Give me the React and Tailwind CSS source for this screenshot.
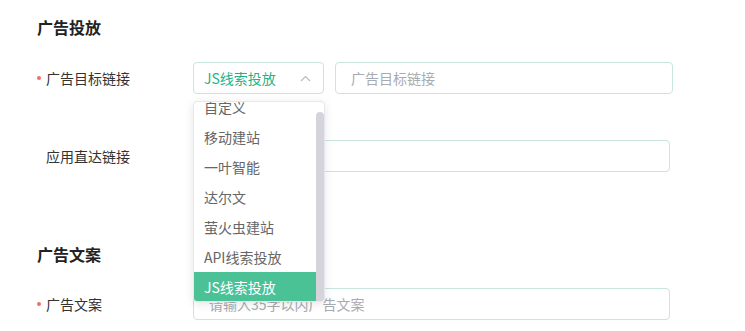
import React from "react";

const FONT = { fontFamily: '"Noto Sans CJK SC", "Noto Sans", sans-serif' };

const OPTIONS = ["自定义", "移动建站", "一叶智能", "达尔文", "萤火虫建站", "API线索投放", "JS线索投放"];

const Label = ({ required, children }) => (
  <div className="w-[156px] shrink-0 flex items-center text-[14px] text-[#333]">
    <span className={`w-[4px] h-[4px] rounded-full bg-[#f56c6c] mr-[5px] ${required ? "" : "invisible"}`} />
    <span>{children}</span>
  </div>
);

const Input = ({ placeholder, className = "" }) => (
  <div className={`h-[32px] border border-[#c8e6dc] rounded-[4px] bg-white flex items-center px-[15px] text-[14px] text-[#a8abb2] ${className}`}>
    {placeholder}
  </div>
);

export default function App() {
  return (
    <div className="w-[745px] h-[331px] bg-white overflow-hidden" style={FONT}>
      <div className="pl-[37px] pt-[16px]">
        <h2 className="text-[16px] font-bold text-[#222] leading-[22px]">广告投放</h2>

        <div className="mt-[24px] flex items-center">
          <Label required>广告目标链接</Label>
          <div className="relative">
            <div className="w-[131px] h-[32px] border border-[#c8e6dc] rounded-[4px] bg-white flex items-center justify-between pl-[10px] pr-[12px]">
              <span className="text-[14px] text-[#1eb386]">JS线索投放</span>
              <svg width="11" height="7" viewBox="0 0 11 7" fill="none">
                <path d="M1 6L5.5 1.5L10 6" stroke="#b8bcc4" strokeWidth="1.2" />
              </svg>
            </div>
            <div className="absolute z-10 left-0 top-[39px] w-[132px] h-[201px] bg-white rounded-[4px] border border-[#e4e7ed] shadow-[0_2px_10px_rgba(0,0,0,0.1)] overflow-hidden">
              <div className="mt-[-10px] mr-[8px]">
                {OPTIONS.map((o) => (
                  <div
                    key={o}
                    className={`h-[30px] flex items-center pl-[10px] text-[14px] ${
                      o === "JS线索投放" ? "bg-[#4bc296] text-white" : "text-[#666]"
                    }`}
                  >
                    {o}
                  </div>
                ))}
              </div>
              <div className="absolute right-0 top-[10px] bottom-0 w-[8px] rounded-t-[4px] bg-[#d5d4da]" />
            </div>
          </div>
          <Input placeholder="广告目标链接" className="ml-[11px] w-[338px]" />
        </div>

        <div className="mt-[46px] flex items-center">
          <Label>应用直达链接</Label>
          <Input placeholder="" className="w-[477px]" />
        </div>

        <h2 className="mt-[71px] text-[16px] font-bold text-[#222] leading-[22px]">广告文案</h2>

        <div className="mt-[23px] flex items-center">
          <Label required>广告文案</Label>
          <Input placeholder="请输入35字以内广告文案" className="w-[477px]" />
        </div>
      </div>
    </div>
  );
}
